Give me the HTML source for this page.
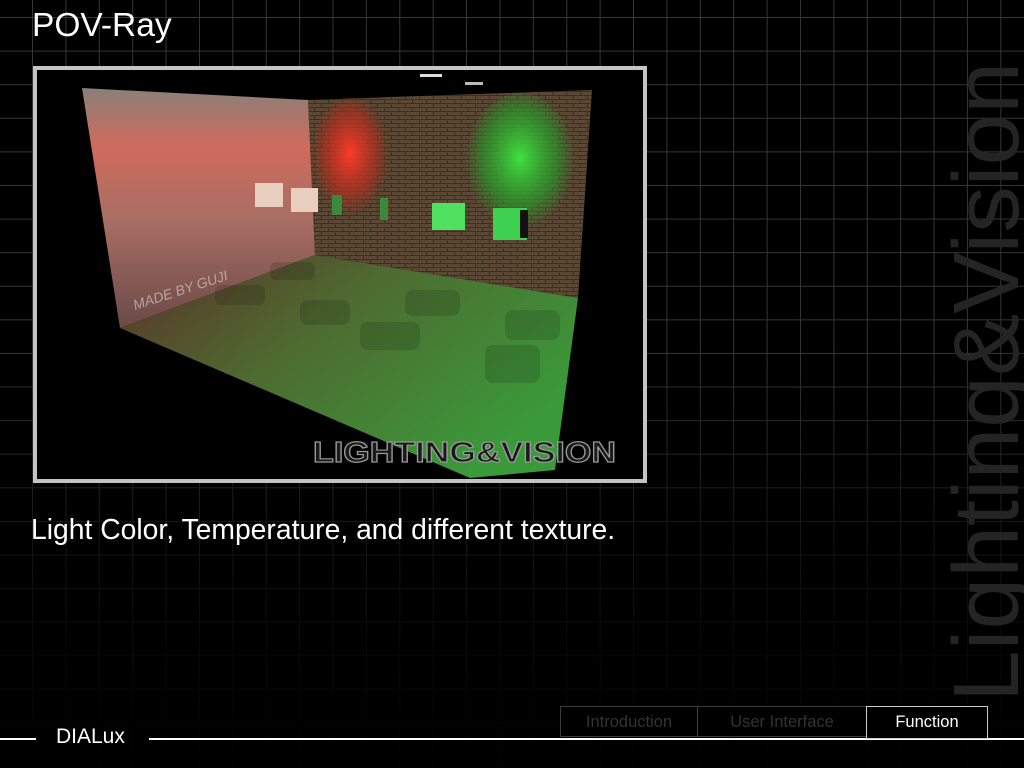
<!DOCTYPE html>
<html><head><meta charset="utf-8"><style>
html,body{margin:0;padding:0;background:#000;}
body{width:1024px;height:768px;position:relative;overflow:hidden;font-family:"Liberation Sans",sans-serif;}
.grid{position:absolute;left:0;top:0;width:1024px;height:768px;
background-image:linear-gradient(to right,#363636 1px,transparent 1px),linear-gradient(to bottom,#363636 1px,transparent 1px);
background-size:33.4px 33.6px;background-position:32px 17px;
-webkit-mask-image:linear-gradient(to bottom,#000 0%,#000 45%,rgba(0,0,0,0.3) 75%,rgba(0,0,0,0.05) 95%);
mask-image:linear-gradient(to bottom,#000 0%,#000 45%,rgba(0,0,0,0.3) 75%,rgba(0,0,0,0.05) 95%);}
.title{position:absolute;left:32px;top:7px;color:#fff;font-size:33.5px;}
.cap{position:absolute;left:31px;top:513px;color:#fff;font-size:28.3px;}
.frame{position:absolute;left:33px;top:66px;width:606px;height:409px;border:4px solid #c4c4c4;background:#000;}
.line{position:absolute;top:738px;height:2px;background:#fff;}
.dl{position:absolute;left:56px;top:725px;color:#fff;font-size:21px;}
.tab{position:absolute;top:706px;height:31px;box-sizing:border-box;border:1px solid #3c3c3c;color:#333;font-size:16.5px;text-align:center;line-height:31px;background:#000;}
</style></head><body>
<div class="grid"></div>
<svg style="position:absolute;left:0;top:0" width="1024" height="768">
<text transform="translate(1018,702) rotate(-90)" font-family="Liberation Sans" font-size="93" fill="#242424" textLength="640" lengthAdjust="spacingAndGlyphs">Lighting&amp;Vision</text>
</svg>
<div class="title">POV-Ray</div>
<div class="frame">
<svg width="606" height="409" viewBox="37 70 606 409">
<defs>
<linearGradient id="lw" x1="0" y1="0" x2="0" y2="1"><stop offset="0" stop-color="#8a8078"/><stop offset="0.25" stop-color="#d06a5c"/><stop offset="0.55" stop-color="#a86e64"/><stop offset="1" stop-color="#6a4a48"/></linearGradient>
<linearGradient id="fl" x1="0" y1="0" x2="1" y2="0.6"><stop offset="0" stop-color="#5a3028"/><stop offset="0.45" stop-color="#4e6a30"/><stop offset="1" stop-color="#3a9a3a"/></linearGradient>
<radialGradient id="rs" cx="0.5" cy="0.45" r="0.5"><stop offset="0" stop-color="#ff3a28"/><stop offset="0.65" stop-color="#b03020" stop-opacity="0.7"/><stop offset="1" stop-color="#a03020" stop-opacity="0"/></radialGradient>
<radialGradient id="gs" cx="0.5" cy="0.45" r="0.5"><stop offset="0" stop-color="#40e040"/><stop offset="0.65" stop-color="#2a9a2a" stop-opacity="0.7"/><stop offset="1" stop-color="#2a9a2a" stop-opacity="0"/></radialGradient>
<pattern id="br" width="14" height="8" patternUnits="userSpaceOnUse"><rect width="14" height="8" fill="#3a3026"/><rect x="0" y="0" width="13" height="3" fill="#5a4834"/><rect x="0" y="4" width="6" height="3" fill="#5a4834"/><rect x="7" y="4" width="7" height="3" fill="#5a4834"/></pattern>
</defs>
<polygon points="308,100 592,90 578,298 315,255" fill="url(#br)"/>
<ellipse cx="350" cy="160" rx="40" ry="62" fill="url(#rs)"/>
<ellipse cx="520" cy="165" rx="55" ry="72" fill="url(#gs)"/>
<polygon points="82,88 308,100 315,255 120,328" fill="url(#lw)"/>
<polygon points="120,328 315,255 578,298 555,470 470,478" fill="url(#fl)"/>
<g fill="#000" opacity="0.13">
<rect x="360" y="322" width="60" height="28" rx="8"/>
<rect x="405" y="290" width="55" height="26" rx="8"/>
<rect x="300" y="300" width="50" height="25" rx="8"/>
<rect x="505" y="310" width="55" height="30" rx="8"/>
<rect x="485" y="345" width="55" height="38" rx="8"/>
<rect x="270" y="262" width="45" height="18" rx="6"/>
<rect x="215" y="285" width="50" height="20" rx="6"/>
</g>
<rect x="255" y="183" width="28" height="24" fill="#e8cfc0"/>
<rect x="291" y="188" width="27" height="24" fill="#e8cfc0"/>
<rect x="332" y="195" width="10" height="20" fill="#3a8a3a"/>
<rect x="380" y="198" width="8" height="22" fill="#3a8a3a"/>
<rect x="432" y="203" width="33" height="27" fill="#50e060"/>
<rect x="493" y="208" width="34" height="32" fill="#40d050"/>
<rect x="520" y="210" width="8" height="28" fill="#111"/>
<text x="135" y="310" transform="rotate(-18 135 310)" font-family="Liberation Sans" font-style="italic" font-size="14" fill="#c8b8b0" opacity="0.8">MADE BY GUJI</text>
<text x="313" y="462" font-family="Liberation Sans" font-weight="bold" font-size="29" fill="#1a1a1a" stroke="#999" stroke-width="1.2" textLength="303" lengthAdjust="spacingAndGlyphs">LIGHTING&amp;VISION</text>
<rect x="420" y="74" width="22" height="3" fill="#ddd"/>
<rect x="465" y="82" width="18" height="3" fill="#bbb"/>
</svg>
</div>
<div class="cap">Light Color, Temperature, and different texture.</div>
<div class="line" style="left:0;width:36px"></div>
<div class="line" style="left:149px;width:875px"></div>
<div class="dl">DIALux</div>
<div class="tab" style="left:560px;width:138px">Introduction</div>
<div class="tab" style="left:697px;width:170px">User Interface</div>
<div class="tab" style="left:866px;width:122px;border-color:#ccc;color:#fff;height:33px;line-height:31px">Function</div>
</body></html>
